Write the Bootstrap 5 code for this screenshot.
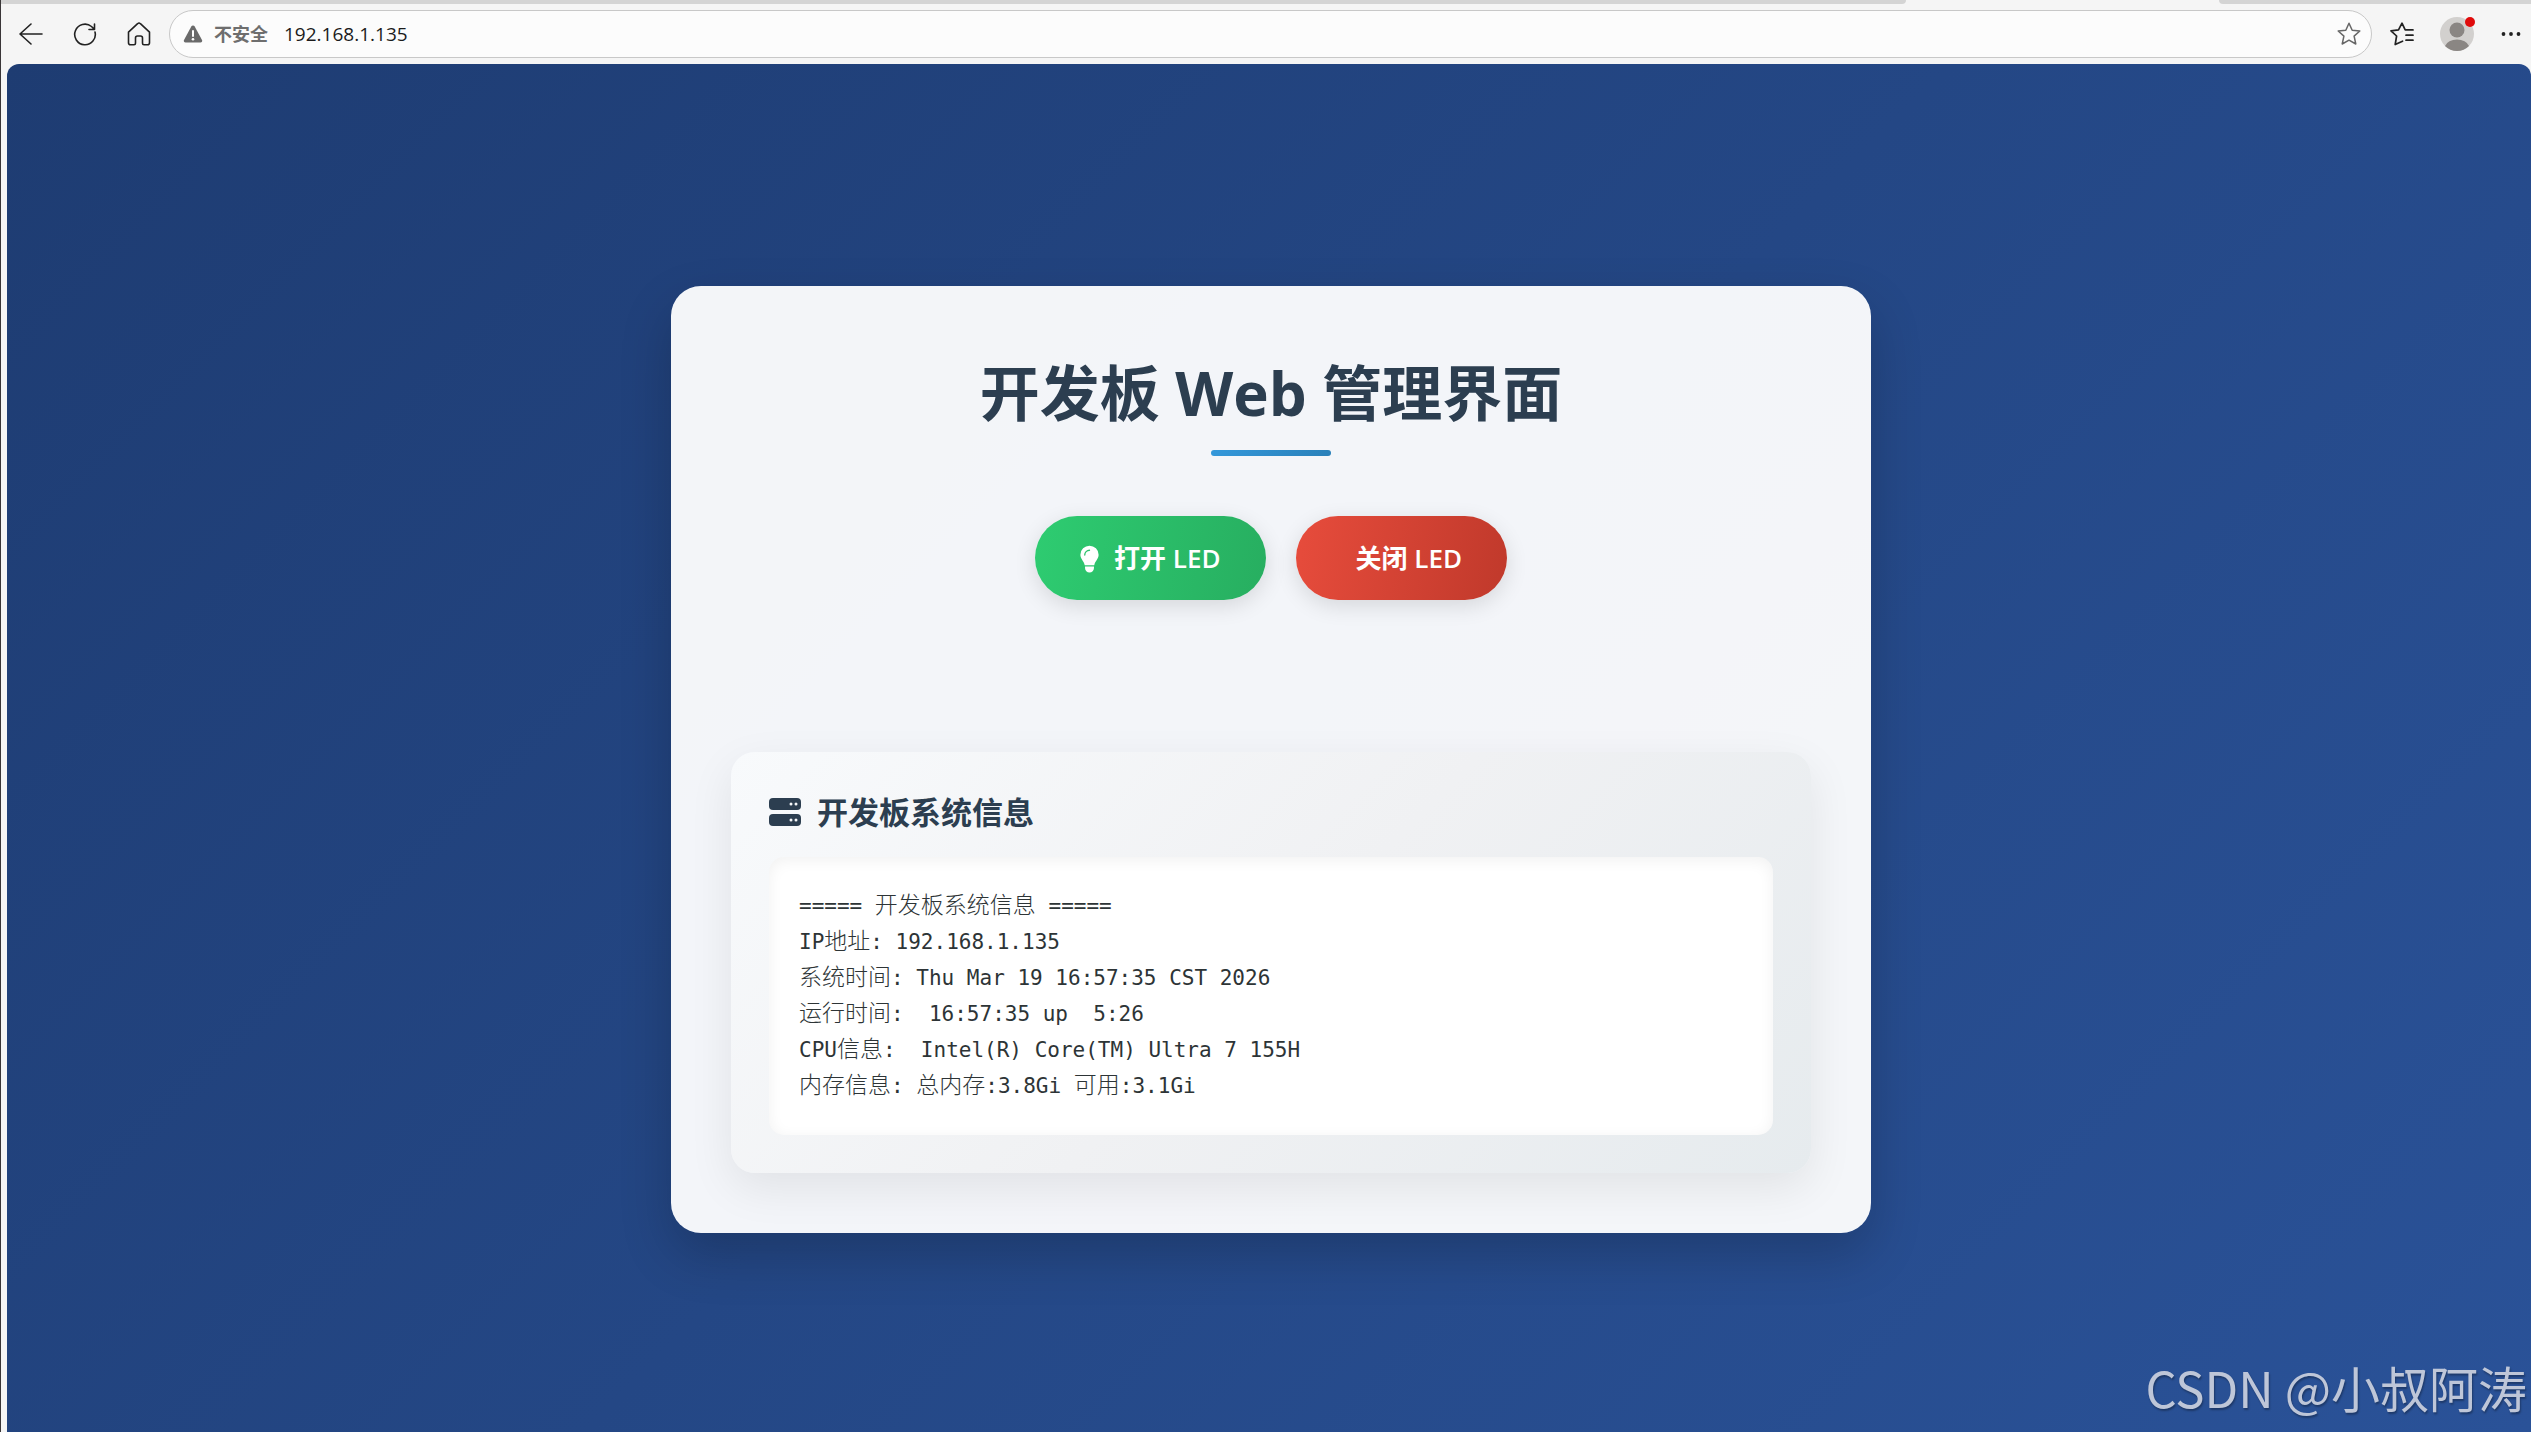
<!DOCTYPE html>
<html lang="zh-CN">
<head>
<meta charset="utf-8">
<meta name="viewport" content="width=device-width, initial-scale=1">
<title>开发板 Web 管理界面</title>
<link href="https://cdn.jsdelivr.net/npm/bootstrap@5.3.0/dist/css/bootstrap.min.css" rel="stylesheet">
<style>
  body { font-family: "Open Sans", "Noto Sans CJK SC", sans-serif; background: #f5f5f5; color: #2c3e50; border-left: 1px solid #3a3638; }
  .tab-strip { height: 4px; }
  .tab-left { flex: 1905 1 0; background: #d4d4d4; border-radius: 0 0 12px 0; }
  .tab-open { flex: 313 1 0; }
  .tab-right { flex: 312 1 0; background: #d4d4d4; border-radius: 0 0 0 12px; }
  .toolbar { height: 60px; padding: 0 10px 0 18px; gap: 30px; }
  .tool { padding: 0; border: 0; background: none; display: flex; color: #222; }
  .tool svg { display: block; fill: none; stroke: currentColor; stroke-width: 2; stroke-linecap: round; stroke-linejoin: round; }
  .address { height: 48px; margin: 0 -12px; padding: 0 10px 0 13px; border: 1px solid #c8c8c8; border-radius: 24px; background: #fcfcfc; }
  .address label { font-size: 18px; font-weight: 600; color: #6e6e6e; margin: 0 16px 0 11px; white-space: nowrap; }
  .address input { font-size: 19px; color: #1b1b1b; padding: 0; border: 0; background: none; outline: 0; }
  .profile { margin: 0 -3px 0 -4px; }
  .avatar-dot { position: absolute; top: 0; right: -1px; width: 10px; height: 10px; border-radius: 50%; background: #e00b0b; }
  .viewport { margin-left: 6px; padding: 22px 0 0 4px; border-radius: 12px 12px 0 0; background: linear-gradient(135deg, #1e3c72, #2a5298); }
  .panel-main { width: 1200px; max-width: 96%; padding: 62px 60px 60px; border-radius: 30px; background: rgba(255,255,255,.95); box-shadow: 0 22px 52px rgba(0,0,0,.2); }
  h1 { font-size: 60px; line-height: 90px; font-weight: 700; margin: 0; }
  .title-bar { width: 120px; height: 6px; border-radius: 3px; margin: 12px auto 60px; background: linear-gradient(135deg, #3498db, #2980b9); }
  .actions { gap: 30px; margin-bottom: 152px; }
  .led { height: 84px; padding: 2px 45px 0; gap: 15px; border: 0; border-radius: 42px; color: #fff; font-size: 26px; font-weight: 600; box-shadow: 0 6px 22px rgba(0,0,0,.12); }
  .led-on { background: linear-gradient(100deg, #2ecc71, #27ae60); }
  .led-off { background: linear-gradient(100deg, #e74c3c, #c0392b); }
  .led-off::before { content: ""; }
  .info { padding: 38px; border-radius: 24px; background: linear-gradient(135deg, #f8fafc, #f0f1f3 50%, #e6ebee); box-shadow: 0 15px 45px rgba(0,0,0,.08); }
  .info h2 { font-size: 31px; line-height: 45px; font-weight: 700; margin: 0 0 22px; gap: 16px; }
  .console { font-family: "DejaVu Sans Mono", "Noto Sans CJK SC", monospace; font-size: 21px; line-height: 36px; white-space: pre-wrap; color: #2d3436; padding: 31px 30px; border-radius: 15px; background: #fff; box-shadow: inset 0 3px 15px rgba(0,0,0,.06); }
  .console span { font-family: "Noto Sans CJK SC", sans-serif; font-size: 23px; line-height: 1; font-weight: 300; }
  .watermark { position: absolute; right: 4px; bottom: 8px; font: 400 49px/74px "Noto Sans CJK SC", sans-serif; color: #bec6d8; text-shadow: 1px 2px 2px rgba(0,0,0,.3); }
</style>
</head>
<body class="vh-100 d-flex flex-column overflow-hidden position-relative">
<header>
  <div class="tab-strip d-flex"><div class="tab-left"></div><div class="tab-open"></div><div class="tab-right"></div></div>
  <div class="toolbar d-flex align-items-center">
    <button class="tool" aria-label="返回"><svg width="24" height="24" viewBox="0 0 24 24"><path d="M23 12H1M12 2 1 12l11 10" stroke-width="1.6"/></svg></button>
    <button class="tool" aria-label="刷新"><svg width="24" height="24" viewBox="0 0 24 24"><path d="M22 10a10.300 10.300 0 1 1-3.500-5.500L21 7M21.500 2v5.500H16" stroke-width="1.600"/></svg></button>
    <button class="tool" aria-label="主页"><svg width="24" height="24" viewBox="0 0 24 24"><path d="M1.500 10.200 10.600 1.700a2 2 0 0 1 2.800 0l9.100 8.500v10.600a2 2 0 0 1-2 2H17a1.500 1.500 0 0 1-1.500-1.500V16a2 2 0 0 0-2-2h-3a2 2 0 0 0-2 2v5.300A1.500 1.500 0 0 1 7 22.800H3.500a2 2 0 0 1-2-2z" stroke-width="1.600"/></svg></button>
    <div class="address d-flex align-items-center flex-grow-1">
      <svg width="20" height="18" viewBox="0 0 20 18" aria-hidden="true"><path d="M10 .5a2 2 0 0 1 1.700 1L19 15a1.700 1.700 0 0 1-1.500 2.500h-15A1.700 1.700 0 0 1 1 15L8.300 1.500a2 2 0 0 1 1.700-1z" fill="#6a6a6a"/><path d="M10 6v5" stroke="#fff" stroke-width="2" stroke-linecap="round"/><circle cx="10" cy="14.200" r="1.300" fill="#fff"/></svg>
      <label for="url">不安全</label>
      <input id="url" type="text" class="flex-grow-1" value="192.168.1.135">
      <button class="tool" aria-label="收藏"><svg width="24" height="24" viewBox="0 0 24 24"><path d="m12 1.200 3.200 7 7.600.8-5.700 5.100 1.700 7.900L12 18.200 5.200 22l1.700-7.900L1.200 9l7.600-.8z" stroke="#666" stroke-width="1.500"/></svg></button>
    </div>
    <button class="tool" aria-label="收藏夹"><svg width="24" height="24" viewBox="0 0 24 24"><path d="M12.500 19.200 5.200 22.500 6.600 14 1 8.800l7.500-.9L12 1.200l3.200 6.700H23M16 13.200h7M16 18.200h7" stroke-width="1.700"/></svg></button>
    <button class="tool profile position-relative" aria-label="个人资料"><svg width="34" height="34" viewBox="0 0 34 34"><circle cx="17" cy="17" r="17" fill="#d2d0ce" stroke="none"/><circle cx="17" cy="13" r="7.500" fill="#8a8683" stroke="none"/><path d="M5 29a12.500 9 0 0 1 24 0 17 17 0 0 1-24 0z" fill="#8a8683" stroke="none"/></svg><span class="avatar-dot"></span></button>
    <button class="tool" aria-label="更多"><svg width="20" height="6" viewBox="0 0 20 6"><g fill="#222" stroke="none"><circle cx="2.500" cy="3" r="1.900"/><circle cx="10" cy="3" r="1.900"/><circle cx="17.500" cy="3" r="1.900"/></g></svg></button>
  </div>
</header>
<main class="viewport flex-grow-1 d-flex align-items-center justify-content-center">
  <section class="panel-main">
    <h1 class="text-center">开发板 Web 管理界面</h1>
    <div class="title-bar"></div>
    <div class="actions d-flex justify-content-center">
      <button class="led led-on d-flex align-items-center"><svg width="19" height="28" viewBox="0 0 20 28" aria-hidden="true"><path d="M10 0a9.600 9.600 0 0 1 9.600 9.500c0 4.500-3.700 6.500-4.600 11H5C4.100 16 .4 14 .4 9.500A9.600 9.600 0 0 1 10 0zM5.300 22h9.400v1.500a4.700 4.700 0 0 1-9.400 0z" fill="#fff"/><path d="M5 9.800a5 5 0 0 1 5-5" fill="none" stroke="#2ec36d" stroke-width="1.400" stroke-linecap="round"/></svg>打开 LED</button>
      <button class="led led-off d-flex align-items-center">关闭 LED</button>
    </div>
    <div class="info">
      <h2 class="d-flex align-items-center"><svg width="32" height="28" viewBox="0 0 32 28" aria-hidden="true"><rect width="32" height="12" rx="4" fill="#2c3e50"/><rect y="16" width="32" height="12" rx="4" fill="#2c3e50"/><g fill="#f6f8fa"><circle cx="22" cy="6" r="1.500"/><circle cx="27" cy="6" r="1.500"/><circle cx="22" cy="22" r="1.500"/><circle cx="27" cy="22" r="1.500"/></g></svg>开发板系统信息</h2>
      <div class="console d-flex flex-column">
        <div>===== <span>开发板系统信息</span> =====</div>
        <div>IP<span>地址</span>: 192.168.1.135</div>
        <div><span>系统时间</span>: Thu Mar 19 16:57:35 CST 2026</div>
        <div><span>运行时间</span>:  16:57:35 up  5:26</div>
        <div>CPU<span>信息</span>:  Intel(R) Core(TM) Ultra 7 155H</div>
        <div><span>内存信息</span>: <span>总内存</span>:3.8Gi <span>可用</span>:3.1Gi</div>
      </div>
    </div>
  </section>
</main>
<div class="watermark">CSDN @小叔阿涛</div>
<script src="https://cdn.jsdelivr.net/npm/bootstrap@5.3.0/dist/js/bootstrap.bundle.min.js"></script>
</body>
</html>
